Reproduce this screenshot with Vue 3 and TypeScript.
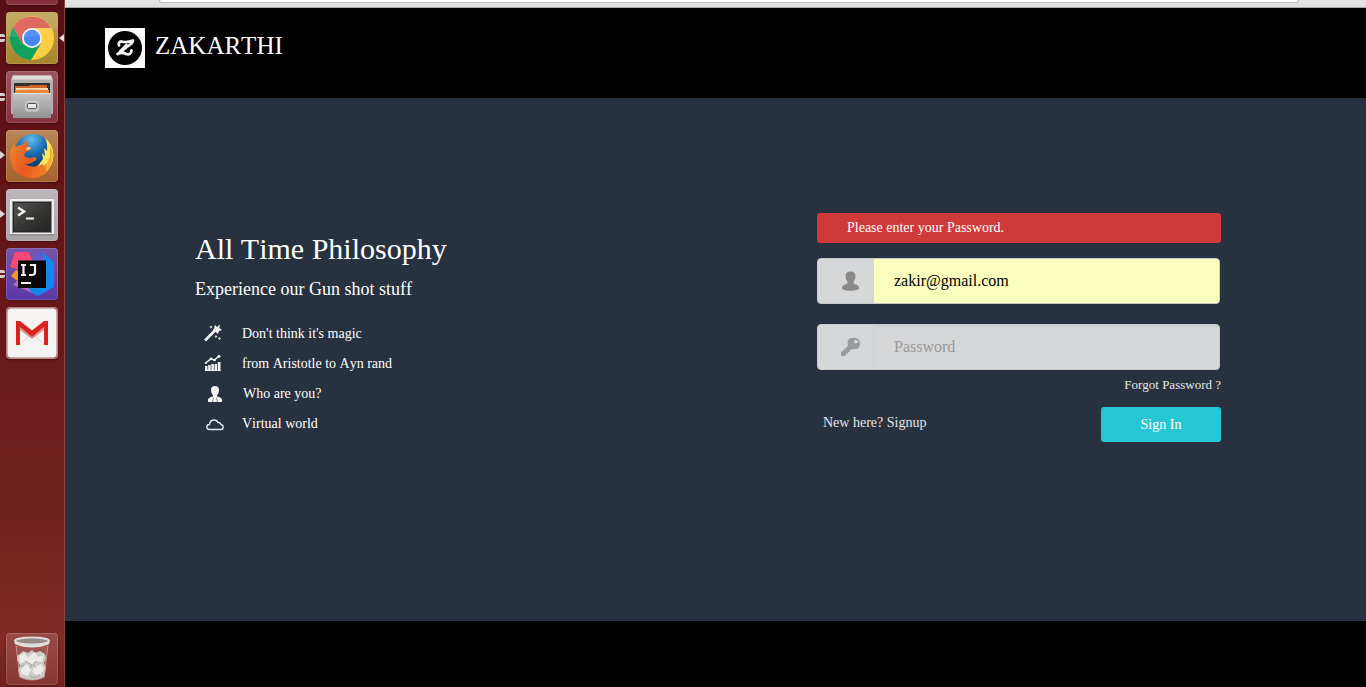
<script setup lang="ts">
interface Feature {
  icon: 'magic' | 'chart' | 'person' | 'cloud'
  text: string
}

const features: Feature[] = [
  { icon: 'magic', text: "Don't think it's magic" },
  { icon: 'chart', text: 'from Aristotle to Ayn rand' },
  { icon: 'person', text: 'Who are you?' },
  { icon: 'cloud', text: 'Virtual world' },
]
</script>

<template>
  <div class="desktop">
    <aside class="launcher">
      <div class="tile dash"></div>

      <div class="tile chrome">
        <i class="pips"></i>
        <svg viewBox="0 0 52 52">
          <circle cx="26" cy="26" r="22" fill="#ffcd40" />
          <path d="M6.900 15A22 22 0 0 1 45.100 16H26L16.500 31.500Z" fill="#dc5a50" />
          <path d="M6.900 15A22 22 0 0 0 25 48L35 31.500L26 36L16.500 31.500Z" fill="#12a05d" />
          <circle cx="26" cy="26" r="10" fill="#f3f3f1" />
          <circle cx="26" cy="26" r="8.200" fill="#4586f0" />
          <path d="M1 24Q26 29 51 16V3Q50 1 48 1H4Q1 1 1 4Z" fill="#fff" opacity=".1" />
        </svg>
        <svg class="active" viewBox="0 0 5 8"><path d="M5 0V8L0 4Z" fill="#e0dcdc" /></svg>
      </div>

      <div class="tile files">
        <i class="pips"></i>
        <svg viewBox="0 0 52 52">
          <defs>
            <linearGradient id="drawer" x2="0" y2="1">
              <stop offset="0" stop-color="#c6c5c3" />
              <stop offset="1" stop-color="#929191" />
            </linearGradient>
          </defs>
          <path d="M7 4.500H45L47 9V43H5V9Z" fill="#b2b0af" />
          <path d="M7 4.500H45L46.500 8.500H5.500Z" fill="#dddcda" />
          <path d="M8 12H44V25H8Z" fill="#303030" />
          <path d="M9 15H23L24 14H41V24H9Z" fill="#ce662b" />
          <path d="M10 17H42V24H10Z" fill="#f7ddb3" />
          <path d="M9 19L25 18.500L43 19V24H9Z" fill="#e8893a" />
          <path d="M7 22H45V47H7Z" fill="url(#drawer)" />
          <path d="M7 22.500H45" stroke="#e0e0e0" />
          <rect x="19.500" y="30.500" width="13" height="9.500" rx="2" fill="#bbb" stroke="#d4d4d4" />
          <rect x="21.500" y="32.500" width="9" height="5" rx="1" fill="#e9e9e9" stroke="#555" />
        </svg>
      </div>

      <div class="tile firefox">
        <i class="arrow"></i>
        <svg viewBox="0 0 52 52">
          <defs>
            <radialGradient id="globe" cx=".45" cy=".15" r=".8">
              <stop offset="0" stop-color="#62bce9" />
              <stop offset=".5" stop-color="#176eb3" />
              <stop offset="1" stop-color="#0a3267" />
            </radialGradient>
            <linearGradient id="fox" x1="0" y1="0" x2="1" y2=".4">
              <stop offset="0" stop-color="#f08a30" />
              <stop offset=".55" stop-color="#e6591f" />
              <stop offset="1" stop-color="#f08028" />
            </linearGradient>
          </defs>
          <circle cx="27" cy="22" r="18" fill="url(#globe)" />
          <path d="M41 11Q47 18 47.500 26Q47 37 40 43Q34 48 25 48Q13 47 7 38Q2 28 5 19L8 13L9 17Q12 15 16 15L22 9L21 15L21 17L25 17L24 20L20 22L18 25Q19 28 24 28L28 27Q32 28 30 30L25 33Q21 35 18 33Q24 38 31 36Q36 34 38 30L41 26Z" fill="url(#fox)" />
          <path d="M39 8Q47 14 47.500 25Q47 35 40 41L41 33L38 36L36 34L31 37L37 29L36 23L39 26L38 18L41 21Q42 14 39 8Z" fill="#ffe65c" />
          <path d="M44 16Q48 23 46 31Q44 37 40 41Q42 35 41 33L44 27Z" fill="#f6ae32" />
          <path d="M21 17L25 17.500L24 19.500L20 20.500Z" fill="#f5c79a" />
        </svg>
      </div>

      <div class="tile terminal">
        <i class="arrow"></i>
        <svg viewBox="0 0 52 52">
          <defs>
            <linearGradient id="screen" x2="1" y2="1">
              <stop offset="0" stop-color="#545552" />
              <stop offset=".5" stop-color="#363735" />
              <stop offset="1" stop-color="#242523" />
            </linearGradient>
          </defs>
          <rect x="4" y="10" width="44" height="36" rx="1" fill="#f1f0ef" />
          <rect x="4" y="45" width="44" height="2" fill="#949194" />
          <rect x="6.500" y="12.500" width="39" height="31" fill="#272827" stroke="#898989" />
          <rect x="8" y="14" width="36" height="28" fill="url(#screen)" />
          <path d="M12 18.500L18 22.500L12 26.500" fill="none" stroke="#f1f1ef" stroke-width="2.500" />
          <path d="M20 29.500H28" stroke="#f1f1ef" stroke-width="2" />
        </svg>
      </div>

      <div class="tile idea">
        <i class="pips"></i>
        <svg viewBox="0 0 52 52">
          <path d="M9 4L22 4L31 19L16 23L4 19Z" fill="#fd4776" />
          <path d="M5 28L10 22L16 26L14 35Z" fill="#f89626" />
          <path d="M36 4L48 14V39L32 48L15 39L28 8Z" fill="#1688ed" />
          <path d="M31 4L36 4L40 25L30 30L24 17Z" fill="#6857cc" />
          <path d="M7 37L14 29L26 45L15 40Z" fill="#b36bc6" />
          <rect x="12" y="12.500" width="28" height="27.500" fill="#080808" />
          <path d="M15 17H20M17.500 17V27M15 27H20M24 17H29V24Q29 27 26 27H23" fill="none" stroke="#f2f2f2" stroke-width="2.200" />
          <path d="M15 35H25" stroke="#f2f2f2" stroke-width="2" />
        </svg>
      </div>

      <div class="tile gmail">
        <svg viewBox="0 0 52 52">
          <rect x="1.500" y="1.500" width="49" height="49" rx="4" fill="#f5f4f2" />
          <path d="M10 14H42V38H10Z" fill="#f5f2f1" />
          <path d="M13 38L24 28M39 38L28 28" stroke="#ddd8d7" fill="none" />
          <path d="M10 14H14L26 23.500L38 14H42V38H38V20L26 30L14 20V38H10Z" fill="#d9211e" />
          <path d="M14 20L26 30L38 20V23L26 32L14 23Z" fill="#ad2825" opacity=".45" />
        </svg>
      </div>

      <div class="tile trash">
        <svg viewBox="0 0 52 52">
          <path d="M9 8L13 45Q26 51 39 45L43 8Z" fill="#b16864" opacity=".45" />
          <path d="M11 23L15 20L17 18L22 20L26 17L29 20L34 18L39 21L40 25L38 30L40 35L38 44Q26 50 14 44L12 37L14 32L11 27Z" fill="#cbcac6" />
          <path d="M13 23L18 20L22 24L29 19L32 24L38 22L36 29L30 28L26 32L19 28L14 31ZM15 36L21 31L25 37L22 43L15 41ZM28 34L35 31L38 36L35 41L30 42L26 39Z" fill="#ecebe7" />
          <path d="M19 28L26 32L24 35M30 28L27 32L30 35M23 42L28 45L34 42M13 34L18 32" fill="none" stroke="#aaa7a4" />
          <path d="M10 12L14 44Q26 50 38 44L42 12" fill="none" stroke="#d0b2af" stroke-width="1" opacity=".65" />
          <ellipse cx="26" cy="8" rx="17" ry="3.500" fill="#948986" stroke="#d9dad6" stroke-width="2" />
          <path d="M9 9.500Q26 17 43 9.500" fill="none" stroke="#dfe0dc" stroke-width="2.500" />
        </svg>
      </div>
    </aside>

    <div class="browser">
      <div class="toolbar"><div class="address"></div></div>

      <header class="header">
        <svg class="logo" viewBox="0 0 40 40">
          <rect width="40" height="40" fill="#fbfbfa" />
          <circle cx="20" cy="20" r="17" fill="#030303" />
          <path d="M14 17.500Q13 13.500 16.500 13.500Q22 15 28 12.500L26.500 15.500L12.500 26Q17 23.500 21 26Q26 27.500 26.500 22.500" fill="none" stroke="#f6f6f4" stroke-width="2.800" stroke-linejoin="round" stroke-linecap="round" />
          <path d="M22.500 16.500L15 24" fill="none" stroke="#f6f6f4" stroke-width="3.200" />
        </svg>
        <span class="brand">ZAKARTHI</span>
      </header>

      <main class="content">
        <section class="intro">
          <h1>All Time Philosophy</h1>
          <h2>Experience our Gun shot stuff</h2>
          <ul>
            <li v-for="feature in features" :key="feature.icon" :class="feature.icon">
              <svg viewBox="1 1 18 18">
                <g v-if="feature.icon === 'magic'" fill="#f5f5f5">
                  <path d="M2 17.500L12 7.500" stroke="#f5f5f5" stroke-width="2.600" />
                  <path d="M12 2L14 4L17 1.500L16.300 5L19 7L16 8L15 11L12.800 9L9.500 8L11 5.500Z" />
                  <path d="M8 2.500L9.500 4L8 5.500L6.500 4ZM16.500 14L18 15.500L16.500 17L15 15.500ZM13 12L14.500 13.500L13 15L11.500 13.500Z" opacity=".8" />
                </g>
                <g v-else-if="feature.icon === 'chart'" fill="#f5f5f5">
                  <path d="M2 13H4.500V18H2ZM5.200 12H7.700V18H5.200ZM8.400 11H10.900V18H8.400ZM11.600 11H14.100V18H11.600ZM14.800 9H17.500V18H14.800Z" />
                  <path d="M2.500 10L8 5.800L11.500 7L16 3" fill="none" stroke="#f5f5f5" stroke-width="1.500" />
                  <circle cx="2.800" cy="10" r="1.100" /><circle cx="8" cy="5.800" r="1.300" />
                  <circle cx="11.500" cy="7" r="1.300" /><circle cx="16" cy="3.200" r="1.500" />
                  <path d="M2 17.500H17.500" stroke="#f5f5f5" />
                </g>
                <g v-else-if="feature.icon === 'person'">
                  <path d="M10 2Q6 2 6 6Q6 9 8 11.500V12.500Q3 13.500 3 16V18H17V16Q17 13.500 12 12.500V11.500Q14 9 14 6Q14 2 10 2Z" fill="#f5f5f5" />
                  <path d="M8.500 13.500L7.500 18M11.500 13.500L12.500 18" stroke="#273140" stroke-width=".5" />
                </g>
                <path v-else d="M4.500 15.500Q1.800 15.500 1.800 13Q1.800 10.500 4.500 10.500Q5 6 9 6Q12 6 13 8.500Q15.500 8 16 10.500Q18.200 11 18.200 13Q18.200 15.500 16 15.500Z" fill="none" stroke="#e5e7e9" stroke-width="1.400" />
              </svg>
              <span>{{ feature.text }}</span>
            </li>
          </ul>
        </section>

        <form class="login" @submit.prevent>
          <div class="error">Please enter your Password.</div>
          <label class="field email">
            <span class="addon">
              <svg viewBox="0 0 20 20">
                <path d="M10.500 .5Q5.500 .5 5.500 5.500Q5.500 8.500 7.500 10.500V12.500L4 14Q1.700 15 1.700 17.500Q4.500 19.800 10.500 19.800Q16.500 19.800 19.300 17.500Q19.300 15 17 14L13.500 12.500V10.500Q15.500 8.500 15.500 5.500Q15.500 .5 10.500 .5Z" fill="#898989" />
              </svg>
            </span>
            <input type="text" value="zakir@gmail.com" />
          </label>
          <label class="field password">
            <span class="addon">
              <svg viewBox="0 0 20 20">
                <path fill-rule="evenodd" d="M13.500 .8Q20 .8 20 6.800Q20 12.300 14 12.300L12 12L10 13.500V15H8V16.500H6V18L4.500 19H1V15.500L7.800 9Q6.100 .8 13.500 .8ZM14 4.200Q14 6.500 16 6.500Q18 6.500 18 4.500Q17.500 2.700 15.500 2.700Q14 2.700 14 4.200Z" fill="#999a9b" />
              </svg>
            </span>
            <input type="password" placeholder="Password" />
          </label>
          <a class="forgot">Forgot Password ?</a>
          <div class="actions">
            <a>New here? Signup</a>
            <button type="button">Sign In</button>
          </div>
        </form>
      </main>
      <footer></footer>
    </div>
  </div>
</template>

<style>
body { margin: 0; overflow: hidden; background: #000; }
</style>

<style scoped>
* { box-sizing: border-box; }
.desktop { display: flex; width: 1366px; height: 687px; overflow: hidden; font-family: "Liberation Serif", serif; font-kerning: none; color: #fff; }
.launcher { width: 65px; height: 687px; flex: none; display: flex; flex-direction: column; gap: 7px; padding: 0 0 2px 6px; border-right: 1px solid #884241; background: linear-gradient(#580f16, #691819 45%, #71211e 75%, #812b25 91%, #73201f); }
.tile { position: relative; flex: none; width: 52px; height: 52px; border-radius: 4px; box-shadow: inset 0 0 0 1px #ffffff25, 0 1px 2px #0005; }
.tile > svg:not(.active) { display: block; width: 52px; height: 52px; }
.dash { margin-top: -47px; background: #84313b; }
.chrome { background: linear-gradient(#bea353, #a8852e); }
.files { background: linear-gradient(#9c5660, #85313e); }
.firefox { background: linear-gradient(#b98657, #a7622d); }
.terminal { background: linear-gradient(#bdb7bb, #aaa5a8); }
.idea { background: linear-gradient(#7756a9, #5938a9); }
.gmail { background: #a66d6d; }
.trash { margin-top: auto; background: linear-gradient(#994a47, #873633); }
.active { position: absolute; width: 5px; height: 8px; left: 53px; top: 22px; }
.arrow { position: absolute; left: -6px; top: 21px; border: 4px solid transparent; border-left: 5px solid #ddd7d8; border-right: 0; }
.pips { position: absolute; left: -6px; top: 22px; width: 5px; height: 8px; background: linear-gradient(#d9cccd 0 3px, transparent 3px 5px, #d9cccd 5px); border-radius: 0 2px 2px 0; }

.browser { flex: 1; display: flex; flex-direction: column; }
.toolbar { height: 8px; flex: none; background: linear-gradient(#e5e5e5, #dedede); border-bottom: 1px solid #aaa; }
.address { width: 1140px; height: 3px; margin-left: 94px; background: #fff; border: 1px solid #bbb; border-top: 0; border-radius: 0 0 3px 3px; }
.header { height: 90px; flex: none; display: flex; align-items: flex-start; gap: 10px; padding: 20px 40px; background: #000; }
.logo { width: 40px; height: 40px; }
.brand { font-size: 25px; line-height: 35px; }
.content { height: 523px; flex: none; display: flex; justify-content: space-between; padding: 115px 145px 0 130px; background: #273140; }
footer { flex: 1; background: #000; }
h1, h2, ul { margin: 0; padding: 0; font-weight: 400; }
.intro { padding-top: 18px; }
h1 { font-size: 30px; line-height: 36px; }
h2 { font-size: 18px; line-height: 22px; margin-top: 11px; }
ul { list-style: none; margin-top: 18px; }
li { height: 30px; display: flex; align-items: center; font-size: 14px; padding-left: 9px; }
li span { padding-top: 2px; }
li svg { width: 18px; height: 18px; margin-right: 20px; }
li.person { padding-left: 11px; }
li.cloud { padding-left: 11px; }
li.person svg { margin: 1px 19px 0 0; }
li.cloud svg { margin: 2px 18px 0 0; }
.login { width: 404px; display: flex; flex-direction: column; }
.error { height: 30px; line-height: 29px; padding-left: 30px; border-radius: 3px; background: #cf3939; font-size: 14px; }
.field { display: flex; width: 403px; height: 46px; overflow: hidden; border: 1px solid #c9cacb; border-radius: 4px; background: #d6d7d9; }
.email { margin-top: 15px; }
.password { margin-top: 20px; }
.addon { width: 56px; flex: none; display: flex; align-items: center; padding-left: 22px; border-right: 1px solid #d1d2d3; }
.addon svg { width: 20px; height: 20px; }
.email .addon { border: 0; }
input { flex: 1; min-width: 0; border: 0; outline: 0; padding: 0 20px; background: transparent; font: 16px "Liberation Serif", serif; font-kerning: none; color: #000; }
.email input { background: #faffbd; }
.password input { box-shadow: inset 0 2px 1px #cccdcc; }
input::placeholder { color: #999; opacity: 1; }
.forgot { align-self: flex-end; margin-top: 7px; font-size: 13px; line-height: 16px; color: #e8e8e8; }
.actions { height: 35px; margin-top: 14px; display: flex; justify-content: space-between; padding-left: 6px; font-size: 14px; line-height: 31px; color: #e5e5e5; }
button { width: 120px; height: 35px; border: 0; border-radius: 3px; background: #27c6d4; color: #fff; font: 14px "Liberation Serif", serif; padding: 0; }
</style>
